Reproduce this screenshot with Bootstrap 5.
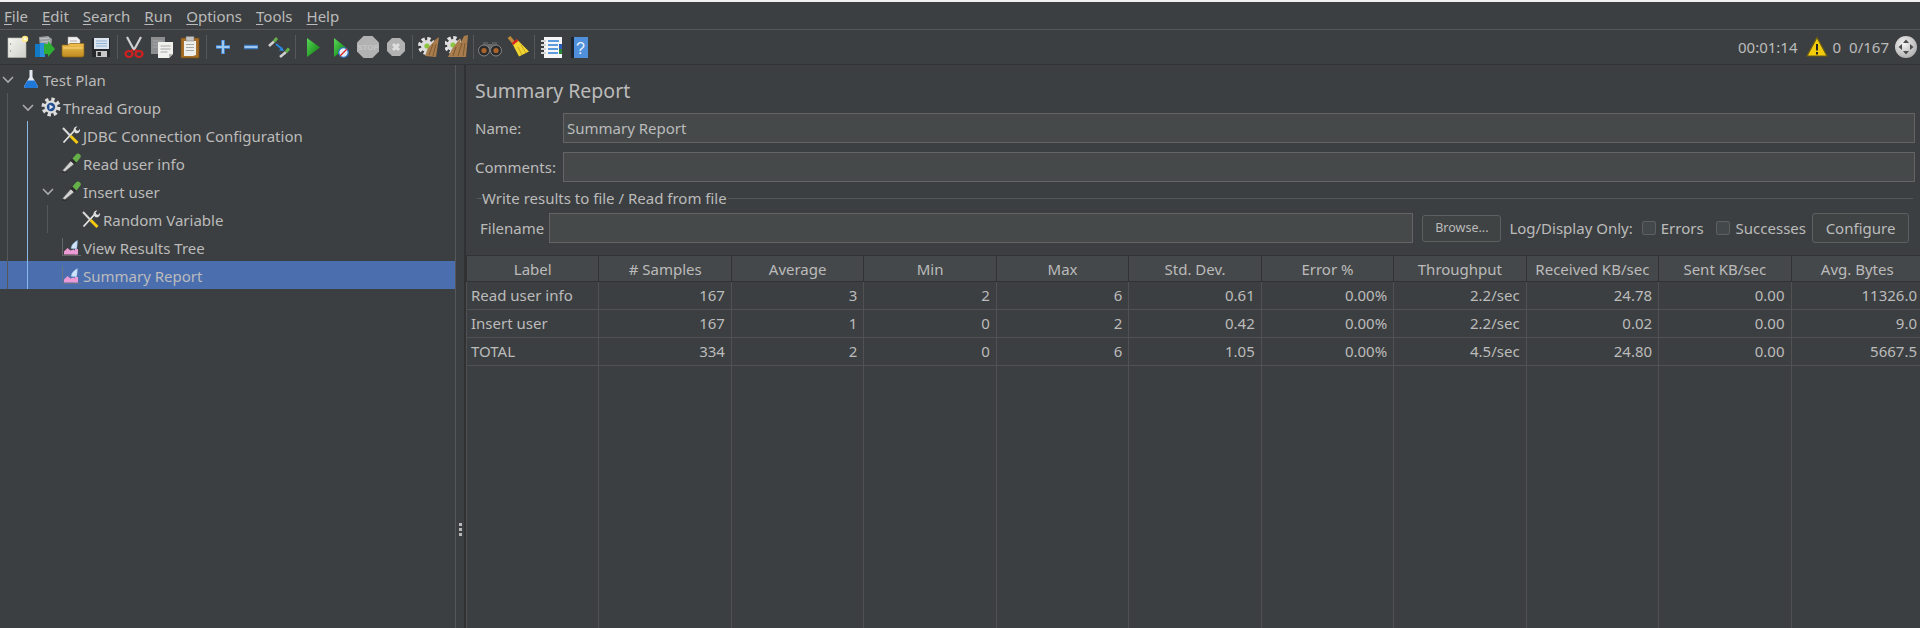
<!DOCTYPE html>
<html lang="en">
<head>
    <meta charset="UTF-8">
    <title>Apache JMeter</title>
    <link href="https://cdn.jsdelivr.net/npm/bootstrap@5.3.0/dist/css/bootstrap.min.css" rel="stylesheet">
    <style>
        html, body { height: 100%; }
        body {
            background: #3c3f41;
            color: #bbbbbb;
            font-family: "Noto Sans", "Liberation Sans", sans-serif;
            font-size: 15px;
            overflow: hidden;
        }
        .app-shell { height: 628px; border-top: 2px solid #f0f0f0; }
        .menu-bar { height: 28px; border-bottom: 1px solid #555759; padding-left: 4px; padding-top: 2px; gap: 14px; }
        .menu-bar u { text-underline-offset: 2px; }
        .tool-bar { height: 35px; border-bottom: 1px solid #323232; padding-left: 5px; }
        .tool-icon { width: 24px; height: 24px; margin-right: 4px; flex: none; }
        .tool-sep { width: 1px; height: 24px; background: #555759; margin-right: 4px; flex: none; }
        .stat-icon { width: 22px; height: 22px; flex: none; }
        .run-stat { margin-right: 3px; }
        .stat-gap-a { margin: 0 5px 0 8px; }
        .stat-gap-b { margin-right: 8px; }
        .stat-gap-c { margin-right: 6px; }
        .main-area { min-height: 0; overflow: hidden; }
        .tree-pane { width: 455px; flex: none; position: relative; }
        .tree-row { height: 28px; display: flex; align-items: center; white-space: nowrap; }
        .tree-row span { padding-top: 2px; }
        .tree-row.active-row { background: #4b6eaf; }
        .depth-0 { padding-left: 1px; }
        .depth-1 { padding-left: 21px; }
        .depth-2 { padding-left: 41px; }
        .depth-3 { padding-left: 61px; }
        .depth-4 { padding-left: 81px; }
        .tree-arrow { width: 14px; height: 14px; flex: none; margin-right: 6px; }
        .tree-icon { width: 20px; height: 20px; flex: none; margin-right: 2px; }
        .tree-guide { position: absolute; width: 1px; background: #555759; }
        .guide-root { left: 7px; top: 28px; height: 196px; }
        .guide-group { left: 27px; top: 56px; height: 168px; background: #8ab8e6; }
        .guide-insert { left: 47px; top: 140px; height: 28px; }
        .split-bar { width: 11px; flex: none; border-left: 1px solid #555759; border-right: 2px solid #2f3133; padding-top: 458px; gap: 2px; }
        .split-dot { width: 3px; height: 3px; background: #b8b8b8; }
        .report-pane { min-width: 0; overflow: hidden; }
        .report-title { font-size: 19.5px; line-height: 26px; margin: 13px 0 0 9px; }
        .form-line { display: flex; align-items: center; }
        .name-line { margin-top: 9px; margin-right: 5px; }
        .form-label-text { width: 97px; flex: none; padding-left: 9px; }
        .field-box { height: 30px; background: #45494a; border: 1px solid #646464; color: #bbbbbb; line-height: 28px; padding-left: 3px; }
        .group-head { margin-top: 5px; height: 22px; margin-right: 7px; }
        .group-dash { width: 5px; height: 1px; background: #555759; margin-left: 11px; }
        .group-rule { height: 1px; background: #555759; margin-left: 1px; }
        .file-line { margin-top: 4px; padding-left: 14px; padding-right: 11px; }
        .file-label { margin-right: -3px; }
        .jm-btn { height: 30px; background: #3f4344; border: 1px solid #5e6060; border-radius: 3px; color: #bbbbbb; font-size: 15px; width: 97px; padding: 0; flex: none; }
        .jm-btn.browse-btn { height: 27px; width: 79px; font-size: 12.500px; margin-left: 1px; }
        .jm-check { width: 14px; height: 14px; border: 1px solid #5e6060; background: #43494a; border-radius: 2px; flex: none; }
        .check-a { margin-left: 1px; margin-right: -3px; }
        .check-b { margin-left: 4px; margin-right: -2px; }
        .last-check-text { margin-right: -2px; }
        .table-wrap { margin-top: 12px; }
        .result-table { table-layout: fixed; width: 1458px; height: 380px; border-collapse: collapse; margin: 0; }
        .result-table th { height: 26px; background: #45484a; font-weight: 400; text-align: center; border: 1px solid #323232; padding: 1px 0 0; white-space: nowrap; }
        .result-table td { height: 28px; border: 1px solid #515151; padding: 0 6px 0 4px; text-align: right; }
        .result-table td:first-child { text-align: left; }
        .result-table tr.fill-row td { height: auto; }
    </style>
</head>
<body>
<svg width="0" height="0" class="position-absolute">
    <defs>
        <linearGradient id="greenTri" x1="0" y1="0" x2="1" y2="1"><stop offset="0" stop-color="#58d858"/><stop offset="1" stop-color="#0a7a0a"/></linearGradient>
        <linearGradient id="pageGrad" x1="0" y1="0" x2="1" y2="1"><stop offset="0" stop-color="#f6f6f2"/><stop offset="1" stop-color="#cfcfc8"/></linearGradient>
        <linearGradient id="folderGrad" x1="0" y1="0" x2="0" y2="1"><stop offset="0" stop-color="#f0c050"/><stop offset="1" stop-color="#c08a1e"/></linearGradient>
        <radialGradient id="navGrad" cx=".4" cy=".35" r=".75"><stop offset="0" stop-color="#f4f4f4"/><stop offset="1" stop-color="#a8a8a8"/></radialGradient>
        <symbol id="wrenchTool" viewBox="0 0 20 20">
            <path d="M2.500 17.500L14 5" stroke="#e4e4e4" stroke-width="1.800"/>
            <path d="M12.500 5.500a3.500 3.500 0 0 1 4-4l-2 2 .8 1.700 1.700.8 2-2a3.500 3.500 0 0 1-4.800 4z" fill="#e0e0e0"/>
            <path d="M2 3l7 7.500" stroke="#d8d8d8" stroke-width="2"/>
            <path d="M9.500 11l7 7" stroke="#f2c811" stroke-width="3"/>
        </symbol>
        <symbol id="dropperTool" viewBox="0 0 20 20">
            <path d="M1 19h5" stroke="#2c2e30" stroke-width="1.500"/>
            <path d="M1.500 17.500L10 8l3 3-9 7.500z" fill="#d4d4d4" stroke="#6a6a6a" stroke-width=".6"/>
            <path d="M9 7.500l4.500 4 2-2-4.500-4z" fill="#2e2e2e"/>
            <path d="M11.500 5.500L15 1.500a2.500 2.500 0 0 1 4 3.500l-3.500 4.500z" fill="#66b04a"/>
        </symbol>
        <symbol id="chartTool" viewBox="0 0 20 20">
            <path d="M1.500 1v17.500H20" fill="none" stroke="#777" stroke-width=".7"/>
            <path d="M3 17.500v-3l3.500-3.500 3 2.500 3-1 3 2v3z" fill="#ec9ad4"/>
            <path d="M10 11.500c.5-4 3.500-6.500 6.500-8-.3 3.500-.3 6.500-1 8.500z" fill="#cfe4fa" stroke="#7ea9d6" stroke-width=".5"/>
            <path d="M15.500 12v5.500" stroke="#ec9ad4" stroke-width="3"/>
        </symbol>
        <symbol id="gearBase" viewBox="0 0 24 24">
            <circle cx="10" cy="11" r="7" fill="none" stroke="#e2e2e2" stroke-width="4" stroke-dasharray="3.200 2.300"/>
            <circle cx="10" cy="11" r="6" fill="#dcdcdc"/>
            <circle cx="10" cy="11" r="2.600" fill="#8cc63e"/>
        </symbol>
    </defs>
</svg>
<div class="app-shell d-flex flex-column">
    <div class="menu-bar d-flex align-items-center flex-shrink-0">
        <span><u>F</u>ile</span><span><u>E</u>dit</span><span><u>S</u>earch</span><span><u>R</u>un</span><span><u>O</u>ptions</span><span><u>T</u>ools</span><span><u>H</u>elp</span>
    </div>
    <div class="tool-bar d-flex align-items-center flex-shrink-0">
        <!-- new -->
        <svg class="tool-icon" viewBox="0 0 24 24"><rect x="3" y="3" width="18" height="19.500" fill="url(#pageGrad)" stroke="#b8b8b0" stroke-width=".6"/><circle cx="5.500" cy="9" r=".7" fill="#888"/><circle cx="5.500" cy="16" r=".7" fill="#888"/><circle cx="20" cy="4" r="3.200" fill="#ffe98a"/><circle cx="20" cy="4" r="1.500" fill="#fffbe0"/></svg>
        <!-- templates -->
        <svg class="tool-icon" viewBox="0 0 24 24"><path d="M6 2l9-1 4 3-1 8H7z" fill="#9b9ea0"/><path d="M7 4l9-1M8 7l9-1" stroke="#c4c6c8"/><rect x="2" y="9" width="5" height="13" fill="#1479c4"/><rect x="7" y="8" width="5" height="14" fill="#2a8fd8"/><path d="M11 9h4V6l7 8-7 8v-3h-4z" fill="#2fae35"/></svg>
        <!-- open -->
        <svg class="tool-icon" viewBox="0 0 24 24"><path d="M7 2h9l3 3v9H7z" fill="#f0f0f0" stroke="#aaa" stroke-width=".5"/><path d="M9 6h7M9 9h7" stroke="#b0b0b0"/><path d="M1 10h6l2-1.500h14V20a2 2 0 0 1-2 2H3a2 2 0 0 1-2-2z" fill="url(#folderGrad)" stroke="#8b6414" stroke-width=".7"/><path d="M2 13h20" stroke="#f7d680"/></svg>
        <!-- save -->
        <svg class="tool-icon" viewBox="0 0 24 24"><path d="M3 3h18v19H3z" fill="#26282c"/><rect x="5" y="3" width="15" height="11" fill="#dde6f0"/><path d="M7 6h11M7 8.500h11M7 11h11" stroke="#8fb0d0"/><rect x="7" y="16" width="11" height="6" fill="#c8c8c8"/><rect x="8.500" y="17" width="3.500" height="4" fill="#2a2a2a"/></svg>
        <div class="tool-sep"></div>
        <!-- cut -->
        <svg class="tool-icon" viewBox="0 0 24 24"><path d="M5 2l7 13M19 2l-7 13" stroke="#d0d0d0" stroke-width="2.200"/><path d="M11 14.500l-2 2M13 14.500l2 2" stroke="#c82020" stroke-width="2"/><ellipse cx="7" cy="19" rx="3.500" ry="3" fill="none" stroke="#d21f1f" stroke-width="2.200"/><ellipse cx="17" cy="19" rx="3.500" ry="3" fill="none" stroke="#d21f1f" stroke-width="2.200"/></svg>
        <!-- copy -->
        <svg class="tool-icon" viewBox="0 0 24 24"><rect x="1" y="2" width="14" height="17" fill="#8c8e90"/><path d="M3 6h10M3 9h10M3 12h10" stroke="#a4a6a8"/><path d="M8 7h15v12l-4 4H8z" fill="#f0f0ec"/><path d="M19 23v-4h4z" fill="#b4b4b0"/><path d="M10.500 11h10M10.500 14h10M10.500 17h7" stroke="#a8a8a8"/></svg>
        <!-- paste -->
        <svg class="tool-icon" viewBox="0 0 24 24"><rect x="3" y="3" width="18" height="20" fill="#a56d25" stroke="#6e4614" stroke-width=".7"/><path d="M6 6h12v14l-3 1H6z" fill="#eeeeea"/><path d="M8 1.500h8V6H8z" fill="#c4c4c4" stroke="#777" stroke-width=".5"/><path d="M8 9.500h8M8 12.500h8M8 15.500h8" stroke="#a8a8a8"/></svg>
        <div class="tool-sep"></div>
        <!-- expand -->
        <svg class="tool-icon" viewBox="0 0 24 24"><path d="M12 5v14M5 12h14" stroke="#3f7cc0" stroke-width="4"/><path d="M12 5.500v13M5.500 12h13" stroke="#9fc8f0" stroke-width="2"/></svg>
        <!-- collapse -->
        <svg class="tool-icon" viewBox="0 0 24 24"><path d="M5 12h14" stroke="#3f7cc0" stroke-width="4.500"/><path d="M5.500 12h13" stroke="#9fc8f0" stroke-width="2"/></svg>
        <!-- toggle -->
        <svg class="tool-icon" viewBox="0 0 24 24"><path d="M2 11l5-4.500" stroke="#d0d0d0" stroke-width="2.500"/><path d="M7 6.500L10 3" stroke="#66b04a" stroke-width="3"/><path d="M13 22l6-5" stroke="#d0d0d0" stroke-width="2.500"/><path d="M19 17l3-3.500" stroke="#66b04a" stroke-width="3"/><path d="M9 9l6 5" stroke="#2a86e0" stroke-width="1.800"/><path d="M17 16l-5-.5 3-3.500z" fill="#2a86e0"/></svg>
        <div class="tool-sep"></div>
        <!-- start -->
        <svg class="tool-icon" viewBox="0 0 24 24"><path d="M7 3l13 9.500L7 22z" fill="url(#greenTri)"/></svg>
        <!-- start no pauses -->
        <svg class="tool-icon" viewBox="0 0 24 24"><path d="M6 3l12 9.500L6 22z" fill="url(#greenTri)"/><circle cx="15.500" cy="17.500" r="4.800" fill="#e4eef8" stroke="#2f6fc2" stroke-width="1.300"/><path d="M12 21l7-7" stroke="#d22" stroke-width="1.300"/></svg>
        <!-- stop -->
        <svg class="tool-icon" viewBox="0 0 24 24"><path d="M7.500 1h9l6.500 6.500v9L16.500 23h-9L1 16.500v-9z" fill="#b2b2b2"/><text x="12" y="15" font-size="8" font-weight="700" text-anchor="middle" fill="#c6c6c6" font-family="Liberation Sans">STOP</text></svg>
        <!-- shutdown -->
        <svg class="tool-icon" viewBox="0 0 24 24"><path d="M8 3h8l5 5v8l-5 5H8l-5-5V8z" fill="#b2b2b2"/><path d="M9 9l6 6M15 9l-6 6" stroke="#dedede" stroke-width="3"/></svg>
        <div class="tool-sep"></div>
        <!-- clear -->
        <svg class="tool-icon" viewBox="0 0 24 24"><use href="#gearBase"/><path d="M8 21l3-8 7-8 4-3-1 7-2 13z" fill="#a87c4c"/><path d="M12 20l4-11M16 21l3-12" stroke="#7c5a32"/></svg>
        <!-- clear all -->
        <svg class="tool-icon" viewBox="0 0 24 24"><use href="#gearBase" transform="translate(-2 -1)"/><path d="M3 22l4-8 6-8 3-3-1 6 4-8 4-1-2 22z" fill="#a87c4c"/><path d="M8 21l3-9M13 21l4-13M18 21l2-13" stroke="#7c5a32"/></svg>
        <div class="tool-sep"></div>
        <!-- search -->
        <svg class="tool-icon" viewBox="0 0 24 24"><path d="M5 7h5v4H5zM14 7h5v4h-5z" fill="#55585a"/><rect x="9.500" y="9" width="5" height="5" fill="#6a6a6a"/><circle cx="6" cy="15.500" r="5.500" fill="#2c2c2c" stroke="#9a9a9a" stroke-width=".8"/><circle cx="18" cy="15.500" r="5.500" fill="#2c2c2c" stroke="#9a9a9a" stroke-width=".8"/><circle cx="6" cy="15.500" r="2.600" fill="#a8642c"/><circle cx="18" cy="15.500" r="2.600" fill="#a8642c"/></svg>
        <!-- reset search -->
        <svg class="tool-icon" viewBox="0 0 24 24"><path d="M3 2l5 6" stroke="#c08a3a" stroke-width="3.500"/><path d="M6 8l5-3.500 12 12-10 5z" fill="#f2d430"/><path d="M6.500 9l5-4" stroke="#d42020" stroke-width="2.500"/><path d="M12 12l4 8M15 10l5 8" stroke="#c8a820"/></svg>
        <div class="tool-sep"></div>
        <!-- function helper -->
        <svg class="tool-icon" viewBox="0 0 24 24"><rect x="5" y="2" width="18" height="21" fill="#f6f6f6"/><rect x="20" y="14" width="3" height="5" fill="#2a8a3a"/><rect x="20" y="9" width="3" height="5" fill="#2a5fc0"/><path d="M9 6h11M9 10h10M9 14h10M9 18h10" stroke="#2a7fd6" stroke-width="1.500"/><path d="M2 6h5M2 10h5M2 14h5M2 18h5" stroke="#d4d4d4" stroke-width="2"/></svg>
        <!-- help -->
        <svg class="tool-icon" viewBox="0 0 24 24"><rect x="4" y="2" width="17" height="21" fill="#4f8fdc"/><rect x="4" y="2" width="3" height="21" fill="#1c2530"/><text x="13.500" y="19" font-size="16" text-anchor="middle" fill="#e8f0fa" font-family="Liberation Sans">?</text></svg>
        <div class="run-stat d-flex align-items-center ms-auto">
            <span>00:01:14</span>
            <svg class="stat-icon stat-gap-a" viewBox="0 0 22 22"><path d="M11 1.500l10 18.500H1z" fill="#f4cb0c" stroke="#6b5c12" stroke-width="1.200"/><path d="M11 8v6.500M11 16v2.500" stroke="#222" stroke-width="2"/></svg>
            <span class="stat-gap-b">0</span><span class="stat-gap-c">0/167</span>
            <svg class="stat-icon" viewBox="0 0 22 22"><circle cx="11" cy="11" r="11" fill="url(#navGrad)"/><path d="M11 3.500l3 3.500H8zM11 18.500l3-3.500H8zM3.500 11L7 8v6zM18.500 11L15 8v6z" fill="#4c4c4c"/></svg>
        </div>
    </div>
    <div class="main-area d-flex flex-grow-1">
        <div class="tree-pane">
            <div class="tree-row depth-0">
                <svg class="tree-arrow" viewBox="0 0 14 14"><path d="M2 5l5 5 5-5" fill="none" stroke="#aaa" stroke-width="1.600"/></svg>
                <svg class="tree-icon" viewBox="0 0 20 20"><path d="M8.500 1h3v7l5 8.500a1.500 1.500 0 0 1-1.500 2.500H5a1.500 1.500 0 0 1-1.500-2.500l5-8.500z" fill="#e4eaf2"/><path d="M6.500 11.500h7l3 5a1.500 1.500 0 0 1-1.500 2.500H5a1.500 1.500 0 0 1-1.500-2.500z" fill="#1f78d8"/></svg>
                <span>Test Plan</span>
            </div>
            <div class="tree-row depth-1">
                <svg class="tree-arrow" viewBox="0 0 14 14"><path d="M2 5l5 5 5-5" fill="none" stroke="#aaa" stroke-width="1.600"/></svg>
                <svg class="tree-icon" viewBox="0 0 20 20"><circle cx="10" cy="10" r="7.500" fill="none" stroke="#dedede" stroke-width="4" stroke-dasharray="3.200 2.700"/><circle cx="10" cy="10" r="6.500" fill="#dcdcdc"/><circle cx="10" cy="10" r="4.200" fill="#234f8e"/><path d="M8.500 7.500l4 2.500-4 2.500z" fill="#dfe9f5"/></svg>
                <span>Thread Group</span>
            </div>
            <div class="tree-row depth-3">
                <svg class="tree-icon"><use href="#wrenchTool"/></svg>
                <span>JDBC Connection Configuration</span>
            </div>
            <div class="tree-row depth-3">
                <svg class="tree-icon"><use href="#dropperTool"/></svg>
                <span>Read user info</span>
            </div>
            <div class="tree-row depth-2">
                <svg class="tree-arrow" viewBox="0 0 14 14"><path d="M2 5l5 5 5-5" fill="none" stroke="#aaa" stroke-width="1.600"/></svg>
                <svg class="tree-icon"><use href="#dropperTool"/></svg>
                <span>Insert user</span>
            </div>
            <div class="tree-row depth-4">
                <svg class="tree-icon"><use href="#wrenchTool"/></svg>
                <span>Random Variable</span>
            </div>
            <div class="tree-row depth-3">
                <svg class="tree-icon"><use href="#chartTool"/></svg>
                <span>View Results Tree</span>
            </div>
            <div class="tree-row active-row depth-3">
                <svg class="tree-icon"><use href="#chartTool"/></svg>
                <span>Summary Report</span>
            </div>
            <div class="tree-guide guide-root"></div>
            <div class="tree-guide guide-group"></div>
            <div class="tree-guide guide-insert"></div>
        </div>
        <div class="split-bar d-flex flex-column align-items-center">
            <div class="split-dot"></div><div class="split-dot"></div><div class="split-dot"></div>
        </div>
        <div class="report-pane flex-grow-1 d-flex flex-column">
            <div class="report-title">Summary Report</div>
            <div class="form-line name-line">
                <span class="form-label-text">Name:</span>
                <div class="field-box flex-grow-1">Summary Report</div>
            </div>
            <div class="form-line name-line">
                <span class="form-label-text">Comments:</span>
                <div class="field-box flex-grow-1"></div>
            </div>
            <div class="d-flex align-items-center group-head">
                <div class="group-dash"></div>
                <div>Write results to file / Read from file</div>
                <div class="group-rule flex-grow-1"></div>
            </div>
            <div class="form-line file-line gap-2">
                <span class="file-label">Filename</span>
                <div class="field-box flex-grow-1"></div>
                <button class="jm-btn browse-btn" type="button">Browse...</button>
                <span>Log/Display Only:</span>
                <span class="jm-check check-a"></span><span>Errors</span>
                <span class="jm-check check-b"></span><span class="last-check-text">Successes</span>
                <button class="jm-btn" type="button">Configure</button>
            </div>
            <div class="table-wrap flex-grow-1">
                <table class="result-table">
                    <thead>
                        <tr><th>Label</th><th># Samples</th><th>Average</th><th>Min</th><th>Max</th><th>Std. Dev.</th><th>Error %</th><th>Throughput</th><th>Received KB/sec</th><th>Sent KB/sec</th><th>Avg. Bytes</th></tr>
                    </thead>
                    <tbody>
                        <tr><td>Read user info</td><td>167</td><td>3</td><td>2</td><td>6</td><td>0.61</td><td>0.00%</td><td>2.2/sec</td><td>24.78</td><td>0.00</td><td>11326.0</td></tr>
                        <tr><td>Insert user</td><td>167</td><td>1</td><td>0</td><td>2</td><td>0.42</td><td>0.00%</td><td>2.2/sec</td><td>0.02</td><td>0.00</td><td>9.0</td></tr>
                        <tr><td>TOTAL</td><td>334</td><td>2</td><td>0</td><td>6</td><td>1.05</td><td>0.00%</td><td>4.5/sec</td><td>24.80</td><td>0.00</td><td>5667.5</td></tr>
                        <tr class="fill-row"><td></td><td></td><td></td><td></td><td></td><td></td><td></td><td></td><td></td><td></td><td></td></tr>
                    </tbody>
                </table>
            </div>
        </div>
    </div>
</div>
</body>
</html>
